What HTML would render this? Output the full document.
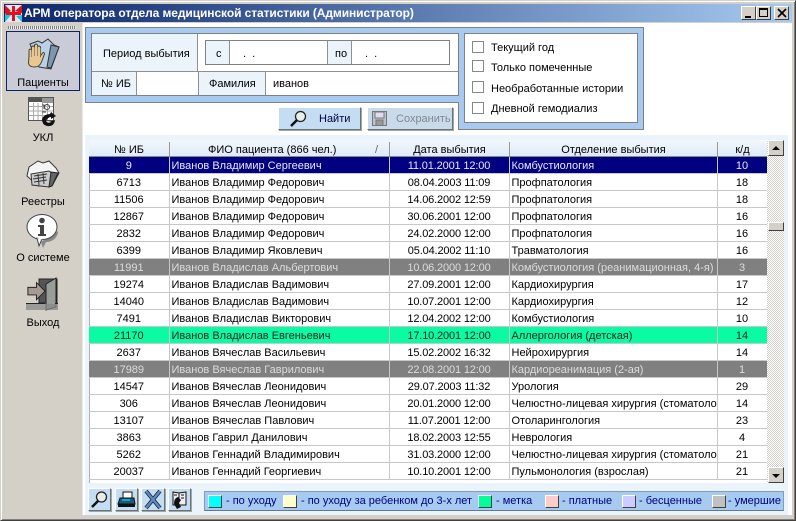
<!DOCTYPE html>
<html><head><meta charset="utf-8">
<style>
html,body{margin:0;padding:0}
body{width:796px;height:521px;overflow:hidden;position:relative;background:#d4d0c8;font:11px "Liberation Sans","DejaVu Sans",sans-serif;color:#000}
.a{position:absolute;box-sizing:border-box}
.t{position:absolute;white-space:nowrap;line-height:14px}
.c{text-align:center}
.raised{background:#d4d0c8;border:1px solid;border-color:#fff #404040 #404040 #fff}
.btn{position:absolute;box-sizing:border-box;background:#c5ddf3;border:1px solid;border-color:#fff #707070 #707070 #fff;box-shadow:1px 1px 0 #9aa}
.cell{position:absolute;box-sizing:border-box;border:1px solid #808080}
table{border-collapse:collapse;table-layout:fixed;position:absolute;left:89px;top:157px;width:678px;font-size:11px}
td{height:13px;padding:3px 0 0;border-bottom:1px solid #c8c8c8;border-right:1px solid #c8c8c8;overflow:hidden;white-space:nowrap;line-height:13px}
td.c{text-align:center}
td.d{text-align:center;letter-spacing:-.15px}
td.l{padding-left:2px}
tr.n td{background:#000080;color:#e8e8f4}
tr.g td{background:#808080;color:#dcdcdc}
tr.m td{background:#0bfba5;color:#222}
.lg{position:absolute;top:495px;width:14px;height:13px;border:1px solid;border-color:#fff #404040 #404040 #fff;box-sizing:border-box}
.lt{position:absolute;top:494px;color:#000080;white-space:nowrap;line-height:14px}
svg{position:absolute;overflow:visible}
</style></head><body>

<!-- window frame -->
<div class="a" style="left:0;top:0;width:796px;height:521px;border:1px solid;border-color:#d4d0c8 #404040 #404040 #d4d0c8;box-shadow:inset 1px 1px 0 #fff,inset -1px -1px 0 #808080"></div>

<!-- title bar -->
<div class="a" style="left:4px;top:4px;width:788px;height:18px;background:linear-gradient(90deg,#0a246a,#a6caf0)"></div>
<svg style="left:5px;top:5px" width="17" height="17" viewBox="0 0 17 17">
<rect width="17" height="17" fill="#e8e8f4"/><path d="M0 0l6 6-6 3z" fill="#e01020"/><path d="M17 0l-7 6 7 2z" fill="#e01020"/><path d="M0 17l6-7-6-1z" fill="#18c8e8"/><path d="M17 17l-6-6 6-1z" fill="#18c8e8"/><path d="M8.5 1v15M1 8.5h15" stroke="#e01020" stroke-width="3"/>
</svg>
<div class="t" style="left:24px;top:6px;color:#fff;font-weight:bold;font-size:12px;letter-spacing:-.08px">АРМ оператора отдела медицинской статистики (Администратор)</div>
<div class="a raised" style="left:741px;top:6px;width:15px;height:14px"><div class="a" style="left:3px;top:9px;width:6px;height:2px;background:#000"></div></div>
<div class="a raised" style="left:756px;top:6px;width:15px;height:14px"><div class="a" style="left:2px;top:1px;width:9px;height:9px;border:1px solid #000;border-top-width:2px"></div></div>
<div class="a raised" style="left:774px;top:6px;width:15px;height:14px"><svg style="left:3px;top:2px" width="8" height="8"><path d="M0 0l8 8M8 0l-8 8" stroke="#000" stroke-width="1.6"/></svg></div>

<!-- content bg -->
<div class="a" style="left:82px;top:23px;width:710px;height:492px;background:#fff;border-left:1px solid #e8e8e8"></div>
<div class="a" style="left:4px;top:515px;width:788px;height:2px;background:#d4d0c8"></div>

<!-- sidebar -->
<div class="a" style="left:8px;top:26px;width:68px;height:3px;background:repeating-linear-gradient(90deg,#808080 0 1px,#e8e8e8 1px 2px)"></div>
<div class="a" style="left:6px;top:31px;width:74px;height:60px;background:#c9cbd6;border:1px solid #0a246a"></div>

<svg style="left:26px;top:37px" width="34" height="34" viewBox="0 0 34 34">
<path d="M4 7l8-3 4 2 6-4 6 6 5 2-8 22-12-2z" fill="#b9d0e6" stroke="#333"/>
<path d="M25 8l8 2-8 21-4-1z" fill="#7d97b0" stroke="#333"/>
<path d="M3 19V13q1-2 2.500 0V10q1.500-2 3 0V8q1.500-2 3 0v2q1.500-2 3 0v9l2-3q2-1 2 1l-3 8q-2 5-7 5-5.500 0-6-4z" fill="#e8c890" stroke="#443" stroke-width="1"/>
<path d="M5.500 13v7M8.500 10v9M11.500 9v10M14.500 11v8" stroke="#876" stroke-width=".8"/>
</svg>
<div class="t c" style="left:6px;width:74px;top:76px">Пациенты</div>

<svg style="left:28px;top:97px" width="30" height="30" viewBox="0 0 30 30">
<rect x="0.500" y="0.500" width="25" height="23" fill="#fff" stroke="#555"/><rect x="1" y="1" width="24" height="4" fill="#555"/><rect x="14" y="1" width="11" height="5" fill="#999"/>
<path d="M1 9.500h24M1 14h24M1 18.500h24M5.500 6v17M10 6v17M14.500 6v17M19.500 6v17" stroke="#aaa" fill="none"/>
<circle cx="19" cy="10" r="2.500" fill="none" stroke="#444"/><path d="M14 15h4M14 8h2v4" stroke="#444" fill="none"/>
<path d="M14 22q2-5 8-5l1-2 5 4-5 3v-2q-3 0-5 4 2 3 5 1h-2l6-2q-1 7-8 6-5-1-5-7z" fill="#111"/>
</svg>
<div class="t c" style="left:6px;width:74px;top:131px">УКЛ</div>

<svg style="left:26px;top:159px" width="34" height="32" viewBox="0 0 34 32">
<path d="M3 8l9-6 5 2 6-2 7 7 3 5-7 13H12L1 17z" fill="#f4f4f4" stroke="#333"/>
<path d="M5 15l18-3 4 3-4 13-17-2z" fill="#ccc" stroke="#333"/>
<path d="M8 17l13-2M7 20l13-2M8 23l13-2M12 15l1 11M17 14l1 11" stroke="#333"/>
<path d="M25 13l7 1-6 13-3 1z" fill="#666" stroke="#222"/>
</svg>
<div class="t c" style="left:6px;width:74px;top:195px">Реестры</div>

<svg style="left:26px;top:214px" width="34" height="34" viewBox="0 0 34 34">
<path d="M30 16c0 7-6 11-12 11l-3 6-2-6" fill="#888" transform="translate(2 1)"/>
<ellipse cx="16" cy="13" rx="15" ry="12.500" fill="#fff" stroke="#444"/>
<path d="M11 24l5 1-3 7z" fill="#fff" stroke="#444"/><path d="M11.500 23.500l5 1" stroke="#fff" stroke-width="2"/>
<circle cx="16" cy="6.500" r="2.800" fill="#444"/><path d="M12 11h6v9h2v2h-8v-2h2v-7h-2z" fill="#444"/>
</svg>
<div class="t c" style="left:6px;width:74px;top:251px">О системе</div>

<svg style="left:26px;top:277px" width="34" height="34" viewBox="0 0 34 34">
<rect x="13" y="2" width="18" height="24" fill="#555" stroke="#222"/>
<path d="M20 7l10-6v29l-10 3z" fill="#9a9c98" stroke="#222"/>
<path d="M2 13h9V8l9 9-9 9v-5H2z" fill="#a49a92" stroke="#222" transform="translate(0 -2) scale(.95)"/>
<rect x="0" y="27" width="32" height="6" fill="#888" opacity=".75"/><path d="M0 26.500h19M29 26.500h3" stroke="#222"/>
</svg>
<div class="t c" style="left:6px;width:74px;top:316px">Выход</div>

<!-- top panel -->
<div class="a" style="left:85px;top:27px;width:374px;height:76px;background:#a6caf0;border:1px solid #808080;border-right:0"></div>
<div class="a" style="left:458px;top:27px;width:186px;height:103px;background:#a6caf0;border:1px solid #808080;border-left:1px solid #808080"></div>
<div class="a" style="left:457px;top:28px;width:3px;height:74px;background:#a6caf0"></div>

<div class="cell" style="left:91px;top:33px;width:368px;height:63px;background:#fff"></div>
<div class="a" style="left:92px;top:34px;width:106px;height:37px;background:#ebf3fb;border-right:1px solid #909090"></div>
<div class="a" style="left:92px;top:71px;width:366px;height:1px;background:#909090"></div>
<div class="a" style="left:92px;top:72px;width:45px;height:23px;background:#ebf3fb;border-right:1px solid #909090"></div>
<div class="a" style="left:198px;top:72px;width:68px;height:23px;background:#ebf3fb;border-left:1px solid #909090;border-right:1px solid #909090"></div>
<div class="t" style="left:103px;top:47px">Период выбытия</div>
<div class="t" style="left:101px;top:77px">№ ИБ</div>
<div class="t" style="left:209px;top:77px">Фамилия</div>
<div class="t" style="left:273px;top:77px">иванов</div>

<div class="cell" style="left:205px;top:40px;width:245px;height:25px;background:#fff"></div>
<div class="a" style="left:206px;top:41px;width:24px;height:23px;background:#ebf3fb;border-right:1px solid #909090"></div>
<div class="a" style="left:327px;top:41px;width:25px;height:23px;background:#ebf3fb;border-left:1px solid #909090;border-right:1px solid #909090"></div>
<div class="t" style="left:216px;top:47px">с</div>
<div class="t" style="left:243px;top:47px;letter-spacing:1.5px">. .</div>
<div class="t" style="left:335px;top:47px">по</div>
<div class="t" style="left:365px;top:47px;letter-spacing:1.5px">. .</div>

<!-- checks -->
<div class="cell" style="left:464px;top:33px;width:174px;height:90px;background:#fff"></div>
<div class="a" style="left:472px;top:41px;width:12px;height:12px;border:1px solid #888;background:#fff"></div>
<div class="a" style="left:472px;top:60px;width:12px;height:12px;border:1px solid #888;background:#fff"></div>
<div class="a" style="left:472px;top:81px;width:12px;height:12px;border:1px solid #888;background:#fff"></div>
<div class="a" style="left:472px;top:102px;width:12px;height:12px;border:1px solid #888;background:#fff"></div>
<div class="t" style="left:491px;top:41px">Текущий год</div>
<div class="t" style="left:491px;top:61px">Только помеченные</div>
<div class="t" style="left:491px;top:82px">Необработанные истории</div>
<div class="t" style="left:491px;top:102px">Дневной гемодиализ</div>

<!-- find/save -->
<div class="btn" style="left:278px;top:107px;width:83px;height:23px"></div>
<svg style="left:290px;top:110px" width="18" height="17" viewBox="0 0 18 17">
<circle cx="10.500" cy="6.500" r="5" fill="#e8f0e8" stroke="#222" stroke-width="1.300"/><path d="M7 10l-6 6" stroke="#111" stroke-width="2.500"/>
</svg>
<div class="t" style="left:319px;top:112px;color:#000040">Найти</div>
<div class="btn" style="left:367px;top:107px;width:86px;height:23px;background:#c9dbea"></div>
<svg style="left:372px;top:111px" width="16" height="16" viewBox="0 0 16 16">
<rect x=".5" y=".5" width="14" height="14" fill="#b8c4cc" stroke="#777"/><rect x="3" y="1" width="9" height="6" fill="#dde" stroke="#777"/><rect x="4" y="9" width="7" height="5.500" fill="#999" stroke="#777"/>
</svg>
<div class="t" style="left:396px;top:112px;color:#808890">Сохранить</div>

<!-- grid -->
<div class="a" style="left:85px;top:135px;width:703px;height:380px;background:#ebf3fb"></div>
<div class="a" style="left:89px;top:140px;width:678px;height:343px;background:#fff;border-left:1px solid #b0b0b0"></div>
<div class="a" style="left:89px;top:140px;width:678px;height:17px;background:linear-gradient(#f2f7fc,#dfebf7);border-bottom:1px solid #888"></div>
<div class="a" style="left:169px;top:142px;width:1px;height:14px;background:#999"></div>
<div class="a" style="left:389px;top:142px;width:1px;height:14px;background:#999"></div>
<div class="a" style="left:509px;top:142px;width:1px;height:14px;background:#999"></div>
<div class="a" style="left:717px;top:142px;width:1px;height:14px;background:#999"></div>
<div class="t c" style="left:89px;width:80px;top:143px">№ ИБ</div>
<div class="t" style="left:208px;top:143px">ФИО пациента (866 чел.)</div>
<div class="t" style="left:375px;top:143px;color:#666">/</div>
<div class="t c" style="left:390px;width:119px;top:143px">Дата выбытия</div>
<div class="t c" style="left:510px;width:207px;top:143px">Отделение выбытия</div>
<div class="t c" style="left:718px;width:49px;top:143px">к/д</div>

<table>
<colgroup><col style="width:80px"><col style="width:220px"><col style="width:120px"><col style="width:208px"><col style="width:50px"></colgroup>
<tr class="n"><td class="c">9</td><td class="l">Иванов Владимир Сергеевич</td><td class="d">11.01.2001 12:00</td><td class="l">Комбустиология</td><td class="c">10</td></tr>
<tr><td class="c">6713</td><td class="l">Иванов Владимир Федорович</td><td class="d">08.04.2003 11:09</td><td class="l">Профпатология</td><td class="c">18</td></tr>
<tr><td class="c">11506</td><td class="l">Иванов Владимир Федорович</td><td class="d">14.06.2002 12:59</td><td class="l">Профпатология</td><td class="c">18</td></tr>
<tr><td class="c">12867</td><td class="l">Иванов Владимир Федорович</td><td class="d">30.06.2001 12:00</td><td class="l">Профпатология</td><td class="c">16</td></tr>
<tr><td class="c">2832</td><td class="l">Иванов Владимир Федорович</td><td class="d">24.02.2000 12:00</td><td class="l">Профпатология</td><td class="c">16</td></tr>
<tr><td class="c">6399</td><td class="l">Иванов Владимир Яковлевич</td><td class="d">05.04.2002 11:10</td><td class="l">Травматология</td><td class="c">16</td></tr>
<tr class="g"><td class="c">11991</td><td class="l">Иванов Владислав Альбертович</td><td class="d">10.06.2000 12:00</td><td class="l">Комбустиология (реанимационная, 4-я)</td><td class="c">3</td></tr>
<tr><td class="c">19274</td><td class="l">Иванов Владислав Вадимович</td><td class="d">27.09.2001 12:00</td><td class="l">Кардиохирургия</td><td class="c">17</td></tr>
<tr><td class="c">14040</td><td class="l">Иванов Владислав Вадимович</td><td class="d">10.07.2001 12:00</td><td class="l">Кардиохирургия</td><td class="c">12</td></tr>
<tr><td class="c">7491</td><td class="l">Иванов Владислав Викторович</td><td class="d">12.04.2002 12:00</td><td class="l">Комбустиология</td><td class="c">10</td></tr>
<tr class="m"><td class="c">21170</td><td class="l">Иванов Владислав Евгеньевич</td><td class="d">17.10.2001 12:00</td><td class="l">Аллергология (детская)</td><td class="c">14</td></tr>
<tr><td class="c">2637</td><td class="l">Иванов Вячеслав Васильевич</td><td class="d">15.02.2002 16:32</td><td class="l">Нейрохирургия</td><td class="c">14</td></tr>
<tr class="g"><td class="c">17989</td><td class="l">Иванов Вячеслав Гаврилович</td><td class="d">22.08.2001 12:00</td><td class="l">Кардиореанимация (2-ая)</td><td class="c">1</td></tr>
<tr><td class="c">14547</td><td class="l">Иванов Вячеслав Леонидович</td><td class="d">29.07.2003 11:32</td><td class="l">Урология</td><td class="c">29</td></tr>
<tr><td class="c">306</td><td class="l">Иванов Вячеслав Леонидович</td><td class="d">20.01.2000 12:00</td><td class="l">Челюстно-лицевая хирургия (стоматоло</td><td class="c">14</td></tr>
<tr><td class="c">13107</td><td class="l">Иванов Вячеслав Павлович</td><td class="d">11.07.2001 12:00</td><td class="l">Отоларингология</td><td class="c">23</td></tr>
<tr><td class="c">3863</td><td class="l">Иванов Гаврил Данилович</td><td class="d">18.02.2003 12:55</td><td class="l">Неврология</td><td class="c">4</td></tr>
<tr><td class="c">5262</td><td class="l">Иванов Геннадий Владимирович</td><td class="d">31.03.2000 12:00</td><td class="l">Челюстно-лицевая хирургия (стоматоло</td><td class="c">21</td></tr>
<tr><td class="c">20037</td><td class="l">Иванов Геннадий Георгиевич</td><td class="d">10.10.2001 12:00</td><td class="l">Пульмонология (взрослая)</td><td class="c">21</td></tr>
</table>

<!-- scrollbar -->
<div class="a" style="left:767px;top:140px;width:17px;height:343px;background:repeating-conic-gradient(#d4d0c8 0 25%,#fff 0 50%) 0 0/2px 2px"></div>
<div class="a raised" style="left:768px;top:140px;width:16px;height:16px"><div class="a" style="left:3px;top:5px;width:0;height:0;border:4px solid transparent;border-bottom:4px solid #000;border-top:0"></div></div>
<div class="a raised" style="left:768px;top:222px;width:16px;height:9px"></div>
<div class="a raised" style="left:768px;top:467px;width:16px;height:16px"><div class="a" style="left:3px;top:6px;width:0;height:0;border:4px solid transparent;border-top:4px solid #000;border-bottom:0"></div></div>

<!-- bottom toolbar -->
<div class="btn" style="left:88px;top:488px;width:23px;height:23px"></div>
<svg style="left:90px;top:490px" width="19" height="19" viewBox="0 0 19 19"><circle cx="11.500" cy="7" r="5" fill="#e8ece4" stroke="#222" stroke-width="1.300"/><path d="M8 11l-6 6" stroke="#111" stroke-width="2.500"/></svg>
<div class="btn" style="left:115px;top:488px;width:23px;height:23px"></div>
<svg style="left:117px;top:491px" width="19" height="18" viewBox="0 0 19 18"><path d="M6 1h9v6H6z" fill="#fff" stroke="#111"/><path d="M3 7h14l1 6H1z" fill="#1a5a80" stroke="#111"/><path d="M1 13h17v3H1z" fill="#111"/><path d="M5 9h8" stroke="#0ff"/></svg>
<div class="btn" style="left:141px;top:488px;width:24px;height:23px"></div>
<svg style="left:144px;top:490px" width="18" height="19" viewBox="0 0 18 19"><path d="M2 1l14 17M16 1L2 18" stroke="#223" stroke-width="4"/><path d="M2 1l14 17M16 1L2 18" stroke="#5a8cc4" stroke-width="2.400"/></svg>
<div class="btn" style="left:168px;top:488px;width:23px;height:23px"></div>
<svg style="left:171px;top:490px" width="18" height="19" viewBox="0 0 18 19"><path d="M2 2l6 1 7-1v13H2z" fill="#eee" stroke="#111"/><path d="M8 3v8M10 5h3M10 8h3M3 5h3" stroke="#111"/><path d="M3 14q0-6 4-7l3 3-2 3 2 4-4 2z" fill="#111"/></svg>

<!-- legend -->
<div class="a" style="left:204px;top:491px;width:580px;height:20px;background:#a6caf0;border:1px solid #7f9db9;border-bottom-color:#607890"></div>
<div class="lg" style="left:208px;background:#00ffff"></div><div class="lt" style="left:226px">- по уходу</div>
<div class="lg" style="left:283px;background:#ffffcc"></div><div class="lt" style="left:301px">- по уходу за ребенком до 3-х лет</div>
<div class="lg" style="left:478px;background:#00ff99"></div><div class="lt" style="left:496px">- метка</div>
<div class="lg" style="left:545px;background:#ffcccc"></div><div class="lt" style="left:562px">- платные</div>
<div class="lg" style="left:622px;background:#ccccff"></div><div class="lt" style="left:639px">- бесценные</div>
<div class="lg" style="left:712px;background:#c0c0c0"></div><div class="lt" style="left:728px">- умершие</div>

</body></html>
